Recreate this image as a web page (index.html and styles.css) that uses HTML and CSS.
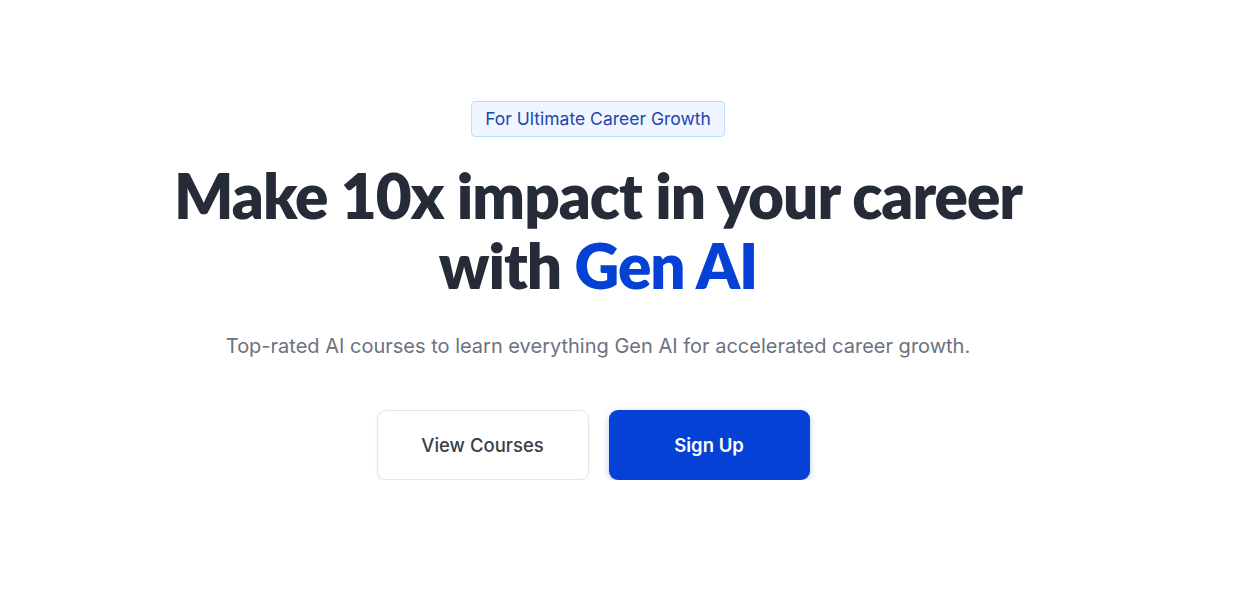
FILE: index.html
```html
<!DOCTYPE html>
<html lang="en">
<head>
<meta charset="utf-8">
<title>Gen AI Courses</title>
<link rel="stylesheet" href="styles.css">
</head>
<body>
<main class="hero">
  <span class="badge">For Ultimate Career Growth</span>
  <h1 class="title">Make 10x impact in your career<br>with <span class="accent">Gen AI</span></h1>
  <p class="subtitle">Top-rated AI courses to learn everything Gen AI for accelerated career growth.</p>
  <div class="actions">
    <a class="btn btn-outline" href="#">View Courses</a>
    <a class="btn btn-primary" href="#">Sign Up</a>
  </div>
</main>
</body>
</html>
```
FILE: styles.css
```css
* { box-sizing: border-box; }
html, body { margin: 0; padding: 0; background: #ffffff; }
body { font-family: Inter, "Noto Sans", sans-serif; }
.hero {
  display: flex;
  flex-direction: column;
  align-items: center;
  padding: 101px 46px 0 0;
}
.badge {
  display: inline-block;
  height: 36px;
  line-height: 34px;
  padding: 0 13px;
  font-size: 17.5px;
  color: #2344b4;
  background: #eff6ff;
  border: 1px solid #bfdbfe;
  border-radius: 4px;
}
.title {
  margin: 23px 0 0;
  font-family: Lato, sans-serif;
  font-weight: 800;
  font-size: 62px;
  line-height: 70px;
  letter-spacing: -1px;
  color: #252b37;
  text-align: center;
}
.accent { color: #0441d4; }
.subtitle {
  margin: 32px 0 0;
  font-size: 20px;
  line-height: 28px;
  color: #6b7280;
  text-align: center;
}
.actions {
  display: flex;
  gap: 20px;
  margin-top: 50px;
  padding-right: 10px;
}
.btn {
  display: flex;
  align-items: center;
  justify-content: center;
  height: 70px;
  border-radius: 9px;
  font-size: 18.5px;
  font-weight: 500;
  text-decoration: none;
}
.btn-outline {
  width: 212px;
  color: #3a3f47;
  background: #fff;
  border: 1px solid #e5e7eb;
  box-shadow: 0 1px 3px rgba(0,0,0,0.08);
}
.btn-primary {
  width: 201px;
  color: #fff;
  font-weight: 600;
  background: #0441d4;
  box-shadow: 0 2px 6px rgba(4,65,212,0.3);
}
```
